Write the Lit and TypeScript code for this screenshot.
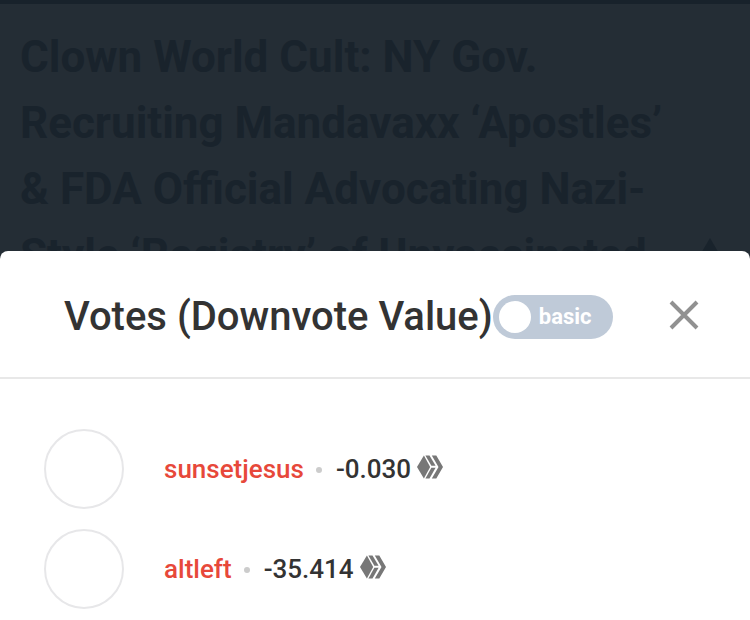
import { LitElement, html, css, svg } from "lit";
import { customElement, property, state } from "lit/decorators.js";

interface Vote {
  name: string;
  value: string;
}

const VOTES: Vote[] = [
  { name: "sunsetjesus", value: "-0.030" },
  { name: "altleft", value: "-35.414" },
];

const hiveShapes = svg`
  <path d="M6.9 0.4 13.2 12 6.9 23.6 0 12Z"/>
  <path d="M8.4 0.4H12.5L18.6 10.8H14.4Z"/>
  <path d="M14.4 12.8H18.6L12.5 23.6H8.4Z"/>
  <path d="M14.8 0.4H19.3L26 12 19.3 23.6H14.8L21.5 12Z"/>
`;

@customElement("vote-row")
export class VoteRow extends LitElement {
  @property() name = "";
  @property() value = "";

  static styles = css`
    :host {
      display: flex;
      align-items: center;
      gap: 40px;
    }
    .avatar {
      box-sizing: border-box;
      flex: none;
      width: 80px;
      height: 80px;
      border: 2px solid #e7e7e9;
      border-radius: 50%;
    }
    .line {
      display: flex;
      align-items: center;
      font-size: 26px;
      line-height: 40px;
      font-weight: 500;
      color: #333;
    }
    .name {
      color: #e7483a;
      text-decoration: none;
    }
    .dot {
      width: 6px;
      height: 6px;
      margin: 2px 14px 0 12px;
      border-radius: 50%;
      background: #ccc;
    }
    .hive {
      width: 26px;
      height: 24px;
      margin: 0 0 4px 6px;
      fill: #777;
    }
  `;

  render() {
    return html`
      <div class="avatar"></div>
      <div class="line">
        <a class="name" href="#${this.name}">${this.name}</a>
        <span class="dot"></span>
        <span>${this.value}</span>
        <svg class="hive" viewBox="0 0 26 24" aria-hidden="true">${hiveShapes}</svg>
      </div>
    `;
  }
}

@customElement("app-root")
export class AppRoot extends LitElement {
  @state() private advanced = false;

  static styles = css`
    :host {
      display: flex;
      flex-direction: column;
      position: relative;
      min-height: 100vh;
      overflow: hidden;
      background: #242d35;
      font-family: Roboto, "Liberation Sans", sans-serif;
    }
    .post {
      position: absolute;
      inset: 0 0 auto;
      display: flex;
      align-items: flex-end;
      padding: 20px 20px 0;
      border-top: 4px solid #18222b;
      color: #19232c;
    }
    .headline {
      flex: 1;
      margin: 0;
      font-size: 44px;
      line-height: 66px;
      font-weight: 700;
    }
    .caret {
      flex: none;
      width: 40px;
      height: 50px;
      fill: #19232c;
    }
    .sheet {
      position: relative;
      flex: 1;
      margin-top: 251px;
      border-radius: 8px 8px 0 0;
      background: #fff;
    }
    .head {
      display: flex;
      align-items: center;
      padding: 38px 44px 32px 64px;
      border-bottom: 2px solid #e8e8e8;
    }
    .title {
      margin: 0;
      font-size: 40px;
      line-height: 56px;
      font-weight: 500;
      color: #333;
      white-space: nowrap;
    }
    .switch {
      display: flex;
      align-items: center;
      flex: none;
      box-sizing: border-box;
      width: 120px;
      height: 44px;
      padding: 0 6px;
      gap: 8px;
      border-radius: 22px;
      background: #bfcad8;
      color: #fff;
      font-size: 22px;
      line-height: 32px;
      font-weight: 700;
    }
    .knob {
      appearance: none;
      flex: none;
      width: 32px;
      height: 32px;
      margin: 0;
      border-radius: 50%;
      background: #fff;
    }
    .close {
      display: flex;
      margin: 0 0 4px auto;
      padding: 6px;
      border: 0;
      background: none;
    }
    .close svg {
      width: 32px;
      height: 32px;
      stroke: #919191;
      stroke-width: 4;
      fill: none;
    }
    .list {
      display: flex;
      flex-direction: column;
      gap: 20px;
      margin: 0;
      padding: 50px 44px 10px;
    }
  `;

  render() {
    return html`
      <article class="post">
        <h1 class="headline">
          Clown World Cult: NY Gov. Recruiting Mandavaxx ‘Apostles’ &amp; FDA
          Official Advocating Nazi-Style ‘Registry’ of Unvaccinated
        </h1>
        <svg class="caret" viewBox="0 0 40 50" aria-hidden="true">
          <path d="M20 0 40 34H0Z" />
        </svg>
      </article>
      <section class="sheet" role="dialog" aria-labelledby="title">
        <header class="head">
          <h2 class="title" id="title">Votes (Downvote Value)</h2>
          <label class="switch">
            <input
              class="knob"
              type="checkbox"
              .checked=${this.advanced}
              @change=${() => (this.advanced = !this.advanced)}
            />
            <span>basic</span>
          </label>
          <button class="close" type="button" aria-label="Close">
            <svg viewBox="0 0 32 32"><path d="M3 3 29 29M29 3 3 29" /></svg>
          </button>
        </header>
        <div class="list">
          ${VOTES.map(
            (v) => html`<vote-row .name=${v.name} .value=${v.value}></vote-row>`
          )}
        </div>
      </section>
    `;
  }
}
